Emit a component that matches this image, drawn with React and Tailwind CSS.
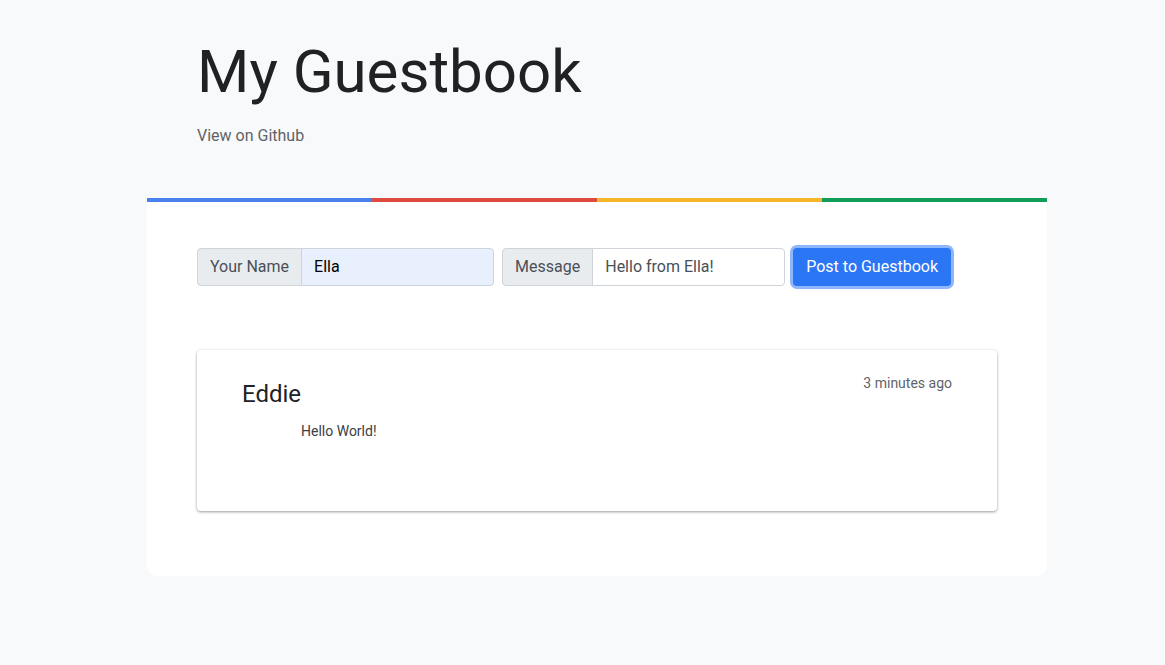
export default function App() {
  return (
    <div className="min-h-[665px] w-full bg-[#f8f9fa] font-['Roboto',sans-serif] text-[#202124]">
      <div className="ml-[147px] w-[900px] pt-[36px]">
        <div className="px-[50px]">
          <h1 className="text-[60px] leading-[72px] font-normal text-[#202124]">My Guestbook</h1>
          <a className="mt-[18px] block text-[16px] leading-[20px] text-[#5f6368]">View on Github</a>
        </div>

        <div className="mt-[52px] flex h-[4px]">
          <div className="flex-1 bg-[#4a80ec]" />
          <div className="flex-1 bg-[#df4a3f]" />
          <div className="flex-1 bg-[#f5b62b]" />
          <div className="flex-1 bg-[#109d58]" />
        </div>

        <div className="rounded-b-[10px] bg-white px-[50px] pt-[46px] pb-[65px]">
          <div className="flex items-center gap-[8px]">
            <div className="flex h-[38px] text-[16px]">
              <span className="flex items-center rounded-l-[4px] border border-[#ced4da] bg-[#e9ecef] px-[12px] text-[#495057]">Your Name</span>
              <span className="-ml-px flex w-[193px] items-center rounded-r-[4px] border border-[#ced4da] bg-[#e8f0fe] px-[12px] text-black">Ella</span>
            </div>
            <div className="flex h-[38px] text-[16px]">
              <span className="flex items-center rounded-l-[4px] border border-[#ced4da] bg-[#e9ecef] px-[12px] text-[#495057]">Message</span>
              <span className="-ml-px flex w-[193px] items-center rounded-r-[4px] border border-[#ced4da] bg-white px-[12px] text-[#495057]">Hello from Ella!</span>
            </div>
            <button className="h-[38px] rounded-[4px] bg-[#2b76f5] px-[13px] text-[16px] text-white ring-[3px] ring-[#8db7fa]">
              Post to Guestbook
            </button>
          </div>

          <div className="mt-[64px] h-[161px] rounded-[4px] bg-white px-[45px] pt-[26px] shadow-[0_1px_3px_rgba(0,0,0,0.4)]">
            <div className="flex items-start justify-between">
              <div className="mt-[4px] text-[24px] leading-[28px] text-[#202124]">Eddie</div>
              <div className="mt-[-2px] text-[14px] leading-[18px] text-[#5f6368]">3 minutes ago</div>
            </div>
            <div className="mt-[14px] pl-[59px] text-[14px] leading-[18px] text-[#3c4043]">Hello World!</div>
          </div>
        </div>
      </div>
    </div>
  )
}
